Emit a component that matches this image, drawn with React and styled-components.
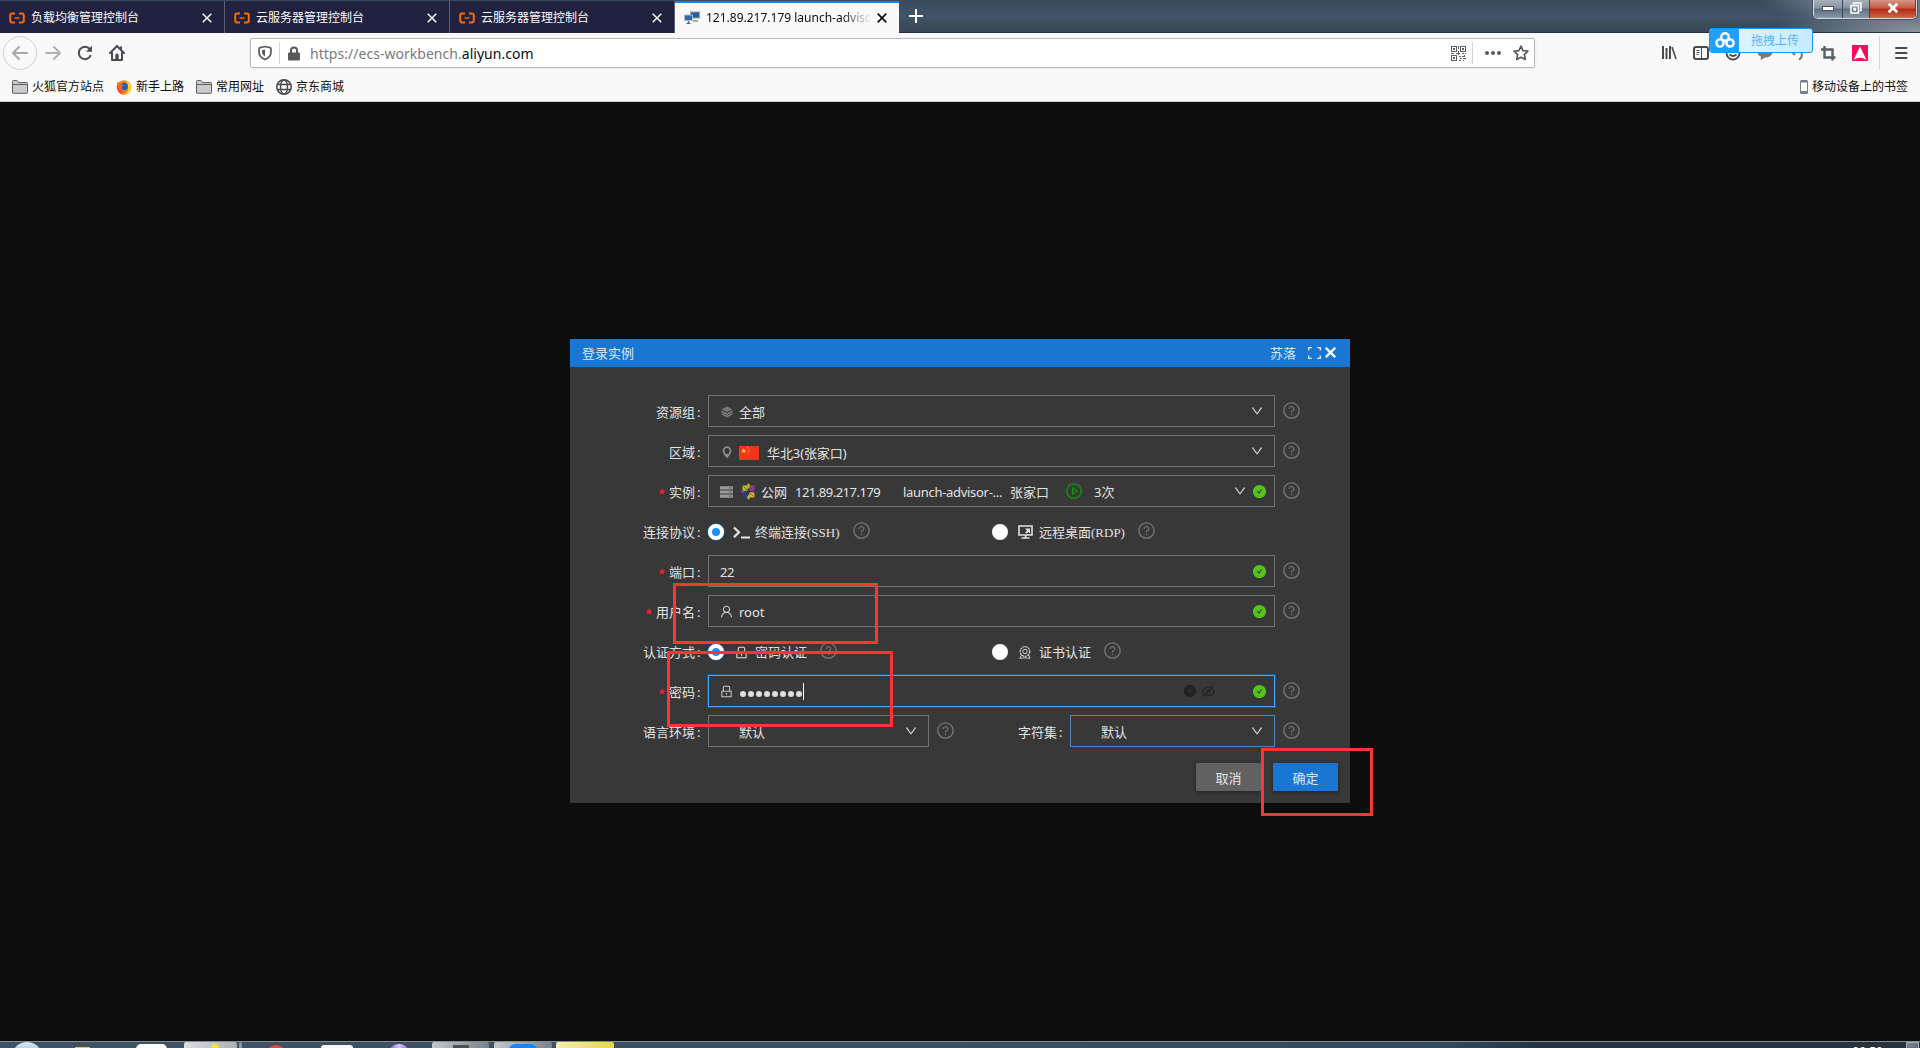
import React from 'react';
import styled, { createGlobalStyle, css } from 'styled-components';
import {
  AiFillCheckCircle,
  AiFillCloseCircle,
  AiOutlineDown,
  AiOutlineEyeInvisible,
  AiOutlineLock,
  AiOutlinePlayCircle,
  AiOutlineQuestionCircle,
  AiOutlineUser
} from 'react-icons/ai';

const GlobalStyle = createGlobalStyle`
  * {
    box-sizing: border-box;
  }

  body {
    margin: 0;
    overflow: hidden;
    background: #0d0d0d;
    font-family: 'Noto Sans', 'Noto Sans CJK SC', sans-serif;
    font-size: 12px;
  }

  svg {
    display: block;
    flex: none;
  }
`;

const Screen = styled.div`
  position: relative;
  display: flex;
  flex-direction: column;
  width: 1920px;
  height: 1048px;
  overflow: hidden;
`;

/* ---------- browser chrome ---------- */

const TabStrip = styled.div`
  display: flex;
  height: 33px;
  padding-top: 1px;
  border-bottom: 1px solid #26323f;
  background:
    radial-gradient(ellipse 150px 34px at 100% 100%, #8b95a0 0%, rgba(139, 149, 160, 0) 100%),
    radial-gradient(ellipse 110px 22px at 1870px 0, #8997a3 0%, rgba(137, 151, 163, 0) 100%),
    linear-gradient(#394a5d 0%, #40546a 55%, #3a4b5a 75%, #38485a 100%);
`;

const Tab = styled.div`
  display: flex;
  align-items: center;
  width: 225px;
  height: 32px;
  padding: 2px 12px 0 9px;
  border-right: 1px solid #5d5f74;
  background: #20223f;
  color: #f9f9fa;

  ${({ $active }) =>
    $active &&
    css`
      width: 224px;
      padding-top: 0;
      border-top: 2px solid #0a84ff;
      border-right: 0;
      background: #f9f9fa;
      color: #0c0c0d;
    `}
`;

const TabTitle = styled.span`
  flex: 1;
  margin: 0 4px 0 6px;
  overflow: hidden;
  line-height: 18px;
  white-space: nowrap;

  ${({ $fade }) =>
    $fade &&
    css`
      margin-right: 6px;
      mask-image: linear-gradient(to right, #000 82%, transparent 100%);
    `}
`;

const NewTab = styled.div`
  padding: 8px 0 0 10px;
`;

const WindowControls = styled.div`
  display: flex;
  width: 104px;
  height: 19px;
  margin: -1px 3px 0 auto;
  border: 1px solid #d5dde4;
  border-top: 0;
  border-radius: 0 0 5px 5px;
  overflow: hidden;
  box-shadow: 0 0 0 1px #46525f;
`;

const WindowButton = styled.div`
  display: flex;
  align-items: center;
  justify-content: center;
  width: ${({ $width }) => $width}px;
  padding-bottom: 2px;
  border-right: 1px solid #3c4856;
  background: ${({ $close }) =>
    $close
      ? 'linear-gradient(#d79588 0%, #c25a45 45%, #ae2a13 50%, #d4674a 100%)'
      : 'linear-gradient(#a7b1bb 0%, #8794a1 45%, #60707f 50%, #8a98a5 100%)'};
`;

const NavBar = styled.div`
  display: flex;
  align-items: center;
  height: 40px;
  padding: 0 12px 0 3px;
  background: #f9f9fa;
`;

const BackButton = styled.div`
  display: flex;
  align-items: center;
  justify-content: center;
  width: 34px;
  height: 34px;
  border: 1px solid #d2d2d4;
  border-radius: 50%;
`;

const NavIcons = styled.div`
  display: flex;
  align-items: center;
  gap: 16px;
  margin-left: 8px;
`;

const UrlBar = styled.div`
  display: flex;
  align-items: center;
  width: 1285px;
  height: 30px;
  margin-left: 125px;
  padding: 0 5px 0 7px;
  border: 1px solid #b9b9bb;
  border-radius: 2px;
  background: #fff;
  box-shadow: 0 1px 4px rgba(0, 0, 0, 0.06);
`;

const Divider = styled.div`
  width: 1px;
  height: ${({ $height = 22 }) => $height}px;
  margin: 0 ${({ $right }) => $right}px 0 ${({ $left }) => $left}px;
  background: #d7d7db;
`;

const UrlText = styled.div`
  flex: 1;
  margin-left: 9px;
  color: #7a7a7c;
  font-size: 14px;
  letter-spacing: 0.03px;

  b {
    color: #0c0c0d;
    font-weight: normal;
  }
`;

const PageActions = styled.div`
  display: flex;
  align-items: center;
  gap: 12px;
`;

const ToolIcons = styled.div`
  display: flex;
  align-items: center;
  gap: 16px;
  margin-left: auto;
`;

const BookmarkBar = styled.div`
  display: flex;
  align-items: center;
  gap: 12px;
  height: 29px;
  padding: 0 12px;
  border-bottom: 1px solid #d0d0d2;
  background: #f9f9fa;
`;

const Bookmark = styled.div`
  display: flex;
  align-items: center;
  gap: 4px;
  line-height: 18px;
  color: #0c0c0d;
  margin-left: ${({ $right }) => ($right ? 'auto' : 0)};
`;

const UploadBadge = styled.div`
  position: absolute;
  top: 28px;
  left: 1709px;
  display: flex;
  width: 104px;
  height: 25px;
  border: 1px solid #1a97fb;
  border-radius: 3px;
  background: linear-gradient(100deg, #e8f7ff, #c5ebff);
  overflow: hidden;
`;

const UploadLogo = styled.div`
  display: flex;
  align-items: center;
  justify-content: center;
  width: 29px;
  padding-bottom: 2px;
  background: #22a0ff;
`;

const UploadText = styled.div`
  flex: 1;
  padding-right: 1px;
  color: #52b5fb;
  line-height: 24px;
  text-align: center;
`;

/* ---------- login dialog ---------- */

const Workspace = styled.main`
  flex: 1;
  padding-top: 237px;
  background: #0d0d0d;
`;

const Dialog = styled.section`
  width: 780px;
  height: 464px;
  margin: 0 auto;
  background: #383838;
  color: #e2e2e2;
  font-size: 13px;
`;

const DialogHeader = styled.header`
  display: flex;
  align-items: center;
  height: 28px;
  padding: 0 14px 0 12px;
  background: #1976d2;
  color: #dbe7f3;
  line-height: 30px;
`;

const DialogUser = styled.span`
  margin: 0 12px 0 auto;
`;

const HeaderIcon = styled.span`
  margin: 0 0 1px ${({ $left = 0 }) => $left}px;
`;

const Form = styled.div`
  display: flex;
  flex-direction: column;
  gap: 8px;
  padding-top: 28px;
`;

const Row = styled.div`
  display: flex;
  align-items: center;
  height: 32px;
`;

const Label = styled.div`
  display: flex;
  align-items: center;
  justify-content: flex-end;
  width: ${({ $width = 138 }) => $width}px;
  padding: 2px 7px 0 0;
  line-height: 20px;

  &::after {
    content: ':';
    width: 4px;
    margin-left: 2px;
  }
`;

const Required = styled.span`
  height: 16px;
  margin-right: 3px;
  color: #f5222d;
  font-family: 'Liberation Mono', monospace;
  font-size: 14px;
  font-weight: bold;
  line-height: 24px;
`;

const Field = styled.div`
  display: flex;
  align-items: center;
  width: ${({ $width = 567 }) => $width}px;
  height: 32px;
  padding: 0 7px 0 11px;
  border: 1px solid ${({ $tone }) => $tone || '#737373'};

  ${({ $focus }) =>
    $focus &&
    css`
      border-color: #40a9ff;
      box-shadow: 0 0 0 1px #23557f;
    `}
`;

const FieldIcon = styled.span`
  display: flex;
  justify-content: center;
  width: ${({ $width = 13 }) => $width}px;
  margin: ${({ $drop = 0 }) => $drop}px ${({ $right = 6 }) => $right}px 0 0;
  color: #c9c9c9;
`;

const Value = styled.span`
  width: ${({ $width }) => ($width ? `${$width}px` : 'auto')};
  padding-top: ${({ $drop = 2 }) => $drop}px;
  margin-left: ${({ $left = 0 }) => $left}px;
  line-height: 20px;
  white-space: nowrap;
  letter-spacing: ${({ $track = 0 }) => $track}px;
`;

const Suffix = styled.span`
  display: flex;
  align-items: center;
  gap: 5px;
  margin-left: auto;
  padding-right: ${({ $select }) => ($select ? 3 : 0)}px;
`;

const Help = styled.span`
  margin: 0 0 ${({ $lift }) => $lift}px ${({ $left }) => $left}px;
  color: #747474;
`;

const Radio = styled.span`
  width: 16px;
  height: 16px;
  border: ${({ $checked }) => ($checked ? '4px' : '8px')} solid #fff;
  border-radius: 50%;
  background: #1890ff;
  box-shadow: ${({ $checked }) => ($checked ? '0 0 0 0.5px #1890ff' : 'none')};
`;

const Option = styled.div`
  display: flex;
  align-items: center;
  width: ${({ $width }) => ($width ? `${$width}px` : 'auto')};
  padding-top: 2px;
`;

const OptionIcon = styled.span`
  display: flex;
  justify-content: center;
  width: 18px;
  margin: 0 5px 0 8px;
`;

const OptionText = styled.span`
  padding-top: 2px;
  font-family: 'Liberation Serif', 'Noto Sans CJK SC', serif;
  line-height: 20px;
`;

const PasswordDots = styled.span`
  display: flex;
  gap: 2px;
  margin: 5px 1px 0 1px;

  i {
    width: 6px;
    height: 6px;
    border-radius: 50%;
    background: #dedede;
  }
`;

const Caret = styled.span`
  width: 1px;
  height: 17px;
  background: #fff;
`;

const PasswordTools = styled.span`
  display: flex;
  align-items: center;
  gap: 4px;
  margin: 0 36px 0 auto;
  color: #222;
`;

const Footer = styled.footer`
  display: flex;
  gap: 12px;
  justify-content: flex-end;
  padding: 16px 12px 0 0;
`;

const Button = styled.button`
  width: 65px;
  height: 28px;
  padding: 1px 0 0;
  border: 0;
  border-radius: 1px;
  background: ${({ $primary }) => ($primary ? '#1976d2' : '#616161')};
  box-shadow: 0 1px 4px rgba(0, 0, 0, 0.4);
  color: #e2e6ea;
  font: inherit;
`;

/* Annotation frames drawn over the page */
const Mark = styled.div`
  position: absolute;
  top: ${({ $y }) => $y}px;
  left: ${({ $x }) => $x}px;
  width: ${({ $w }) => $w}px;
  height: ${({ $h }) => $h}px;
  border: 3px solid #ff3535;
`;

/* ---------- task bar ---------- */

const TaskBar = styled.div`
  display: flex;
  height: 7px;
  border-top: 1px solid #838d95;
  background: linear-gradient(to right, #405163, #3d4e5d 50%, #34495a 75%, #27343f 80%, #27323d);
  overflow: hidden;
`;

const TaskItem = styled.div`
  display: flex;
  justify-content: center;
  width: ${({ $width }) => $width}px;
  height: 20px;
  margin-left: ${({ $left }) => $left}px;
  border-radius: 2px;
  background: ${({ $fill }) => $fill || 'transparent'};
`;

const TaskGlyph = styled.div`
  width: ${({ $width }) => $width}px;
  height: 24px;
  margin-top: ${({ $top }) => $top}px;
  margin-left: ${({ $left = 0 }) => $left}px;
  border-radius: ${({ $radius = 0 }) => $radius};
  background: ${({ $fill }) => $fill};
`;

const Clock = styled.div`
  margin: 3px 23px 0 auto;
  color: #fff;
  line-height: 14px;
`;

const ShowDesktop = styled.div`
  width: 13px;
  height: 20px;
  margin-right: 1px;
  border: 1px solid #a3abb2;
  background: linear-gradient(135deg, #7f8890, #4a535c);
`;

/* ---------- icons ---------- */

const AliIcon = () => (
  <svg width="16" height="12" viewBox="0 0 16 12" fill="none" stroke="#ff6a00" strokeWidth="2">
    <path d="M6 1.5H3.2Q1.2 1.5 1.2 3.5v5q0 2 2 2H6M10 1.5h2.8q2 0 2 2v5q0 2-2 2H10" />
    <path d="M5.5 6h5" strokeWidth="1.4" />
  </svg>
);

const ComputersIcon = () => (
  <svg width="16" height="14" viewBox="0 0 16 14">
    <rect x="6.5" y="1" width="9" height="6" fill="#245f9b" stroke="#8fa4b5" />
    <path d="M9 10h5" stroke="#8a9299" strokeWidth="1.5" />
    <rect x=".5" y="4" width="8" height="5.5" fill="#2c6bad" stroke="#b0bdc7" />
    <path d="M4.5 10v2M2.5 12.3h4" stroke="#5c666e" strokeWidth="1.3" />
  </svg>
);

const Cross = ({ size = 10, width = 1.5, color = 'currentColor' }) => (
  <svg width={size} height={size} viewBox="0 0 10 10" stroke={color} strokeWidth={width}>
    <path d="M.7.7l8.6 8.6M9.3.7L.7 9.3" />
  </svg>
);

const Arrow = ({ flip }) => (
  <svg width="16" height="14" viewBox="0 0 16 14" fill="none" stroke={flip ? '#b1b1b3' : '#a9a9ab'} strokeWidth="2" strokeLinecap="round" strokeLinejoin="round">
    <path d={flip ? 'M1 7h14M9 1l6 6-6 6' : 'M15 7H1M7 1L1 7l6 6'} />
  </svg>
);

const ReloadIcon = () => (
  <svg width="16" height="16" viewBox="0 0 16 16" fill="none" stroke="#4a4a4f" strokeWidth="2">
    <path d="M13.8 10.2A6.2 6.2 0 1 1 12.8 4L14 5.5" />
    <path d="M15 .8v6H9z" fill="#4a4a4f" stroke="none" />
  </svg>
);

const HomeIcon = () => (
  <svg width="16" height="16" viewBox="0 0 16 16" fill="none" stroke="#4a4a4f" strokeWidth="2" strokeLinejoin="round">
    <path d="M1 8l7-7 7 7" strokeLinecap="round" />
    <path d="M3 7v8h10V7M12 1.5v3" />
    <path d="M8 8.5a1.7 1.7 0 0 1 1.7 1.7V15H6.3v-4.8A1.7 1.7 0 0 1 8 8.5z" fill="#4a4a4f" stroke="none" />
  </svg>
);

const ShieldIcon = () => (
  <svg width="14" height="16" viewBox="0 0 14 16" fill="none" stroke="#5a5a5e" strokeWidth="1.7">
    <path d="M7 1.5L2 2.6Q1 2.8 1 4v3q0 5 6 7.5 6-2.5 6-7.500V4q0-1.200-1-1.400z" strokeLinejoin="round" />
    <path d="M7 4.500v7q-3-1.700-3-5V5.200z" fill="#5a5a5e" stroke="none" />
  </svg>
);

const PadlockIcon = () => (
  <svg width="14" height="15" viewBox="0 0 14 15">
    <path d="M4 7V4.500a3 3 0 0 1 6 0V7" fill="none" stroke="#58585b" strokeWidth="2" />
    <rect x="1" y="6.500" width="12" height="8" rx="1.200" fill="#58585b" />
  </svg>
);

const QrIcon = () => (
  <svg width="15" height="15" viewBox="0 0 15 15" fill="none" stroke="#5d5d60" shapeRendering="crispEdges">
    <path d="M.5.5h5v5h-5zM9.500.5h5v5h-5zM.5 9.500h5v5h-5z" />
    <path d="M2 3h2M11 3h2M2 12h2" strokeWidth="2" />
    <path d="M7.500 0v3M7.500 5v4M0 7.500h3M5 7.500h4M11 7.500h2M14 7.500h1M8 10.500h2M11 10.500h2M9 12.500h2M12 12.500h3M8 14.500h2M11.500 14.500h1M13.500 9v2" />
  </svg>
);

const DotsIcon = () => (
  <svg width="16" height="4" viewBox="0 0 16 4" fill="#5a5a5e">
    <circle cx="2" cy="2" r="2" />
    <circle cx="8" cy="2" r="2" />
    <circle cx="14" cy="2" r="2" />
  </svg>
);

const StarIcon = () => (
  <svg width="16" height="16" viewBox="0 0 16 16" fill="none" stroke="#5a5a5e" strokeWidth="1.700" strokeLinejoin="round">
    <path d="M8 1.200l2.100 4.400 4.800.6-3.500 3.400.9 4.900L8 12.200l-4.300 2.300.9-4.900L1.100 6.200l4.800-.6z" />
  </svg>
);

const LibraryIcon = () => (
  <svg width="16" height="16" viewBox="0 0 16 16" stroke="#4a4a4f" strokeWidth="2">
    <path d="M2 1v13M5.500 3v11M9 1v13" />
    <path d="M11 2l4 12" strokeWidth="1.600" />
  </svg>
);

const SidebarIcon = () => (
  <svg width="16" height="14" viewBox="0 0 16 14" fill="none" stroke="#4a4a4f">
    <rect x="1" y="1" width="14" height="12" rx="2" strokeWidth="2" />
    <path d="M8.500 1v12M3.500 4.500h3M3.500 6.500h3M3.500 8.500h2" />
  </svg>
);

const FaceIcon = () => (
  <svg width="16" height="16" viewBox="0 0 16 16" fill="none" stroke="#4a4a4f" strokeWidth="1.800">
    <circle cx="8" cy="8" r="6.500" />
    <path d="M4.500 9.500q3.500 3 7 0" />
  </svg>
);

const ChatIcon = () => (
  <svg width="16" height="16" viewBox="0 0 16 16" fill="#737b83">
    <path d="M8 1c4.500 0 7.500 2.500 7.500 6S12 12.500 8 12.500L3.500 15l.5-3.500C1.500 10.500.5 9 .5 7 .5 3.500 3.500 1 8 1z" />
  </svg>
);

const UndoIcon = () => (
  <svg width="16" height="16" viewBox="0 0 16 16" fill="none" stroke="#737b83" strokeWidth="2">
    <path d="M2 6h7c5 0 5 6.500 1 8.500M6 2L2 6l4 4" />
  </svg>
);

const CropIcon = () => (
  <svg width="15" height="15" viewBox="0 0 15 15" fill="none" stroke="#56606b" strokeWidth="2.400">
    <path d="M3.500 0v11.500H14.500M0 3.500h11.500V14.500" />
  </svg>
);

const PinkIcon = () => (
  <svg width="16" height="16" viewBox="0 0 16 16">
    <path d="M0 0h16v16H0z" fill="#ff0a5b" />
    <path d="M8 1.500L14.500 15Q8 10.500 1.500 15z" fill="#fff" />
  </svg>
);

const MenuIcon = () => (
  <svg width="14" height="12" viewBox="0 0 14 12" stroke="#4a4a4f" strokeWidth="2" strokeLinecap="round">
    <path d="M2 1h10.500M2 6h10.500M2 11h10.500" />
  </svg>
);

const FolderIcon = () => (
  <svg width="16" height="14" viewBox="0 0 16 14" fill="#cbcacf" stroke="#5c5c61">
    <path d="M.5 13V1.500q0-1 1-1H5l1.500 2h8q1 0 1 1V12.500q0 .8-.8.8H1.300q-.8 0-.8-.8z" />
    <path d="M1 4.500h14" />
  </svg>
);

const FirefoxIcon = () => (
  <svg width="16" height="16" viewBox="0 0 16 16">
    <circle cx="8" cy="8.500" r="7.300" fill="#ff8a16" />
    <path d="M10 1q5.500 3 5 8.500Q14 15 8.500 15.800q5-4 3.500-9z" fill="#ffd42e" />
    <path d="M1.500 3L1 9q1 5.500 6.500 6.500-5-5-2.500-9z" fill="#ff3a57" />
    <circle cx="8" cy="7.500" r="4" fill="#2166c2" />
    <path d="M2 3.500q4 0 5 3Q4.500 8 6 10.200q2 1.800 5 .3-2.500 3.800-6.500 1.500Q1 9 2 3.500z" fill="#ff6a1d" />
  </svg>
);

const GlobeIcon = () => (
  <svg width="16" height="16" viewBox="0 0 16 16" fill="none" stroke="#4a4a4f" strokeWidth="1.400">
    <circle cx="8" cy="8" r="7.200" strokeWidth="1.600" />
    <ellipse cx="8" cy="8" rx="3.500" ry="7" />
    <path d="M1.500 5.500h13M1.500 10.500h13" />
  </svg>
);

const PhoneIcon = () => (
  <svg width="8" height="14" viewBox="0 0 8 14">
    <rect width="8" height="14" rx="1.500" fill="#737f8b" />
    <path d="M1 2.500h6v8.500H1z" fill="#fff" />
  </svg>
);

const CloudLogo = () => (
  <svg width="20" height="16" viewBox="0 0 20 16" fill="none" stroke="#fff" strokeWidth="2.400">
    <circle cx="10" cy="5" r="3.700" />
    <circle cx="5" cy="11" r="3.600" />
    <circle cx="15" cy="11" r="3.600" />
  </svg>
);

const LayersIcon = () => (
  <svg width="12" height="12" viewBox="0 0 12 12" fill="#777">
    <path d="M6 .5l5.500 2.700L6 6 .5 3.200z" />
    <path d="M.5 4.200L6 7l5.500-2.800v4.300L6 11.500.5 8.500z" />
    <path d="M.5 6.500L6 9.300l5.500-2.800" fill="none" stroke="#4a4a4a" strokeWidth=".6" />
  </svg>
);

const PinIcon = () => (
  <svg width="10" height="12" viewBox="0 0 10 12">
    <path d="M5 1.200a3.600 3.600 0 0 1 3.600 3.600C8.600 7 6.500 8.800 5 11 3.500 8.800 1.400 7 1.400 4.800A3.600 3.600 0 0 1 5 1.200z" fill="none" stroke="#8f8f8f" strokeWidth="1.700" />
    <path d="M3 8h4l-2 3.500z" fill="#8f8f8f" />
  </svg>
);

const FlagIcon = () => (
  <svg width="20" height="14" viewBox="0 0 20 14">
    <rect width="20" height="14" rx="1" fill="#f5341c" />
    <path d="M4.700 2l.7 1.900h2L5.800 5.100l.6 2-1.700-1.200L3 7.100l.6-2L2 3.900h2z" fill="#ffd93b" />
    <path d="M8 1.500h1M9.300 3.200h1M9.300 5.500h1M8 7.800h1" stroke="#ffb52e" />
  </svg>
);

const ServerIcon = () => (
  <svg width="13" height="12" viewBox="0 0 13 12" fill="#9a9a9a">
    <path d="M0 .3h13v3.200H0zM0 4.400h13v3.200H0zM0 8.500h13v3.200H0z" />
    <path d="M9 1.900h3M9 6h3M9 10.100h3" stroke="#555" strokeWidth=".7" />
  </svg>
);

const CentosIcon = () => (
  <svg width="17" height="17" viewBox="0 0 17 17">
    <path d="M2.500 2.500h5.300v5.300H2.500z" fill="#9ccd2a" />
    <path d="M9.200 2.500h5.300v5.300H9.200z" fill="#a03a86" />
    <path d="M2.500 9.200h5.300v5.300H2.500z" fill="#30358f" />
    <path d="M9.200 9.200h5.300v5.300H9.200z" fill="#efa724" />
    <path d="M8.500 0l1.500 2.500-1.500 3L7 2.500z" fill="#efa724" />
    <path d="M17 8.500L14.500 10l-3-1.500 3-1.500z" fill="#30358f" />
    <path d="M8.500 17L7 14.500l1.500-3 1.500 3z" fill="#9ccd2a" />
    <path d="M0 8.500L2.500 7l3 1.500-3 1.500z" fill="#a03a86" />
    <path d="M3.500 3.500l10 10M13.500 3.500l-10 10" stroke="#383838" strokeWidth=".6" />
  </svg>
);

const PromptIcon = () => (
  <svg width="17" height="13" viewBox="0 0 17 13" fill="none" stroke="#e6e6e6" strokeWidth="2.200">
    <path d="M1 1.500l5 4.800-5 4.800M8 11.500h9" />
  </svg>
);

const RemoteIcon = () => (
  <svg width="15" height="14" viewBox="0 0 15 14" fill="none" stroke="#e2e2e2" strokeWidth="1.600">
    <path d="M1 1h13v9H1zM7.500 10v3M3.500 13h8" />
    <path d="M7 3.500h5v5L10.300 7 8.500 8.700 7.200 7.400 9 5.500z" fill="#e2e2e2" stroke="none" />
  </svg>
);

const CertIcon = () => (
  <svg width="12" height="13" viewBox="0 0 12 13" fill="none" stroke="#cfcfcf">
    <circle cx="6" cy="5.500" r="4.800" strokeDasharray="2.200 .6" strokeWidth="1.200" />
    <circle cx="6" cy="5.500" r="2.200" />
    <path d="M2.500 9L.8 12.200h3M9.500 9l1.700 3.200h-3M4 11.800h4" />
  </svg>
);

const ExpandIcon = () => (
  <svg width="13" height="12" viewBox="0 0 13 12" fill="none" stroke="#e8f1fa" strokeWidth="1.300">
    <path d="M.7 3.500V.7h3M9.300.7h3v2.800M12.300 8.500v2.800h-3M3.700 11.300h-3V8.500" />
  </svg>
);

/* ---------- parts ---------- */

const HelpIcon = ({ left = 7, lift = 1 }) => (
  <Help $left={left} $lift={lift}>
    <AiOutlineQuestionCircle size={19} />
  </Help>
);

const Chevron = () => <AiOutlineDown size={14} color="#dcdcdc" />;
const Valid = () => <AiFillCheckCircle size={15} color="#52c41a" />;

const FormLabel = ({ required, width, children }) => (
  <Label $width={width}>
    {required && <Required>*</Required>}
    {children}
  </Label>
);

const tabs = ['负载均衡管理控制台', '云服务器管理控制台', '云服务器管理控制台'];

const marks = [
  { x: 673, y: 583, w: 205, h: 61 },
  { x: 667, y: 651, w: 226, h: 76 },
  { x: 1261, y: 748, w: 112, h: 68 }
];

const Browser = () => (
  <>
    <TabStrip>
      {tabs.map((title, index) => (
        <Tab key={index}>
          <AliIcon />
          <TabTitle>{title}</TabTitle>
          <Cross />
        </Tab>
      ))}
      <Tab $active>
        <ComputersIcon />
        <TabTitle $fade>121.89.217.179 launch-advisor</TabTitle>
        <Cross width={1.7} />
      </Tab>
      <NewTab>
        <svg width="14" height="14" viewBox="0 0 14 14" stroke="#fff" strokeWidth="2">
          <path d="M7 0v14M0 7h14" />
        </svg>
      </NewTab>
      <WindowControls>
        <WindowButton $width={29}>
          <svg width="12" height="5" viewBox="0 0 12 5">
            <rect x=".5" y=".5" width="11" height="4" fill="#fff" stroke="#4b5562" />
          </svg>
        </WindowButton>
        <WindowButton $width={27}>
          <svg width="12" height="12" viewBox="0 0 12 12" fill="none" stroke="#fff" strokeWidth="1.5">
            <path d="M3.500 2.500V1H11v7.500H9.500" />
            <path d="M1 3.500h7.500V11H1zM4 6.500h1.500V8H4z" />
          </svg>
        </WindowButton>
        <WindowButton $width={46} $close>
          <Cross size={10} width={2.8} color="#fff" />
        </WindowButton>
      </WindowControls>
    </TabStrip>

    <NavBar>
      <BackButton>
        <Arrow />
      </BackButton>
      <NavIcons>
        <Arrow flip />
        <ReloadIcon />
        <HomeIcon />
      </NavIcons>
      <UrlBar>
        <ShieldIcon />
        <Divider $left={7} $right={7} />
        <PadlockIcon />
        <UrlText>
          https://ecs-workbench.<b>aliyun.com</b>
        </UrlText>
        <QrIcon />
        <Divider $left={6} $right={12} />
        <PageActions>
          <DotsIcon />
          <StarIcon />
        </PageActions>
      </UrlBar>
      <ToolIcons>
        <LibraryIcon />
        <SidebarIcon />
        <FaceIcon />
        <ChatIcon />
        <UndoIcon />
        <CropIcon />
        <PinkIcon />
      </ToolIcons>
      <Divider $left={11} $right={14} $height={34} />
      <MenuIcon />
    </NavBar>

    <BookmarkBar>
      <Bookmark>
        <FolderIcon />
        火狐官方站点
      </Bookmark>
      <Bookmark>
        <FirefoxIcon />
        新手上路
      </Bookmark>
      <Bookmark>
        <FolderIcon />
        常用网址
      </Bookmark>
      <Bookmark>
        <GlobeIcon />
        京东商城
      </Bookmark>
      <Bookmark $right>
        <PhoneIcon />
        移动设备上的书签
      </Bookmark>
    </BookmarkBar>

    <UploadBadge>
      <UploadLogo>
        <CloudLogo />
      </UploadLogo>
      <UploadText>拖拽上传</UploadText>
    </UploadBadge>
  </>
);

const LoginDialog = () => (
  <Dialog>
    <DialogHeader>
      登录实例
      <DialogUser>苏落</DialogUser>
      <HeaderIcon>
        <ExpandIcon />
      </HeaderIcon>
      <HeaderIcon $left={4}>
        <Cross size={11} width={2.2} color="#f0f6fc" />
      </HeaderIcon>
    </DialogHeader>

    <Form>
      <Row>
        <FormLabel>资源组</FormLabel>
        <Field>
          <FieldIcon $drop={2}>
            <LayersIcon />
          </FieldIcon>
          <Value>全部</Value>
          <Suffix $select>
            <Chevron />
          </Suffix>
        </Field>
        <HelpIcon />
      </Row>

      <Row>
        <FormLabel>区域</FormLabel>
        <Field>
          <FieldIcon $drop={2}>
            <PinIcon />
          </FieldIcon>
          <FieldIcon $width={20} $drop={4} $right={8}>
            <FlagIcon />
          </FieldIcon>
          <Value $drop={4} $track={-0.1}>
            华北3(张家口)
          </Value>
          <Suffix $select>
            <Chevron />
          </Suffix>
        </Field>
        <HelpIcon />
      </Row>

      <Row>
        <FormLabel required>实例</FormLabel>
        <Field>
          <FieldIcon $drop={2} $right={7}>
            <ServerIcon />
          </FieldIcon>
          <CentosIcon />
          <Value $left={4} $width={34}>
            公网
          </Value>
          <Value $width={108} $track={-0.5}>
            121.89.217.179
          </Value>
          <Value $width={107} $track={-0.3}>
            launch-advisor-...
          </Value>
          <Value $width={55}>张家口</Value>
          <AiOutlinePlayCircle size={18} color="#0d9a0d" />
          <Value $left={11}>3次</Value>
          <Suffix>
            <Chevron />
            <Valid />
          </Suffix>
        </Field>
        <HelpIcon />
      </Row>

      <Row>
        <FormLabel>连接协议</FormLabel>
        <Option $width={284}>
          <Radio $checked />
          <OptionIcon>
            <PromptIcon />
          </OptionIcon>
          <OptionText>终端连接(SSH)</OptionText>
          <HelpIcon left={12} lift={3} />
        </Option>
        <Option>
          <Radio />
          <OptionIcon>
            <RemoteIcon />
          </OptionIcon>
          <OptionText>远程桌面(RDP)</OptionText>
          <HelpIcon left={12} lift={3} />
        </Option>
      </Row>

      <Row>
        <FormLabel required>端口</FormLabel>
        <Field>
          <Value $track={-0.4}>22</Value>
          <Suffix>
            <Valid />
          </Suffix>
        </Field>
        <HelpIcon />
      </Row>

      <Row>
        <FormLabel required>用户名</FormLabel>
        <Field>
          <FieldIcon>
            <AiOutlineUser size={15} />
          </FieldIcon>
          <Value>root</Value>
          <Suffix>
            <Valid />
          </Suffix>
        </Field>
        <HelpIcon />
      </Row>

      <Row>
        <FormLabel>认证方式</FormLabel>
        <Option $width={284}>
          <Radio $checked />
          <OptionIcon>
            <AiOutlineLock size={15} />
          </OptionIcon>
          <OptionText>密码认证</OptionText>
          <HelpIcon left={12} lift={3} />
        </Option>
        <Option>
          <Radio />
          <OptionIcon>
            <CertIcon />
          </OptionIcon>
          <OptionText>证书认证</OptionText>
          <HelpIcon left={12} lift={3} />
        </Option>
      </Row>

      <Row>
        <FormLabel required>密码</FormLabel>
        <Field $focus>
          <FieldIcon>
            <AiOutlineLock size={15} />
          </FieldIcon>
          <PasswordDots>
            {Array.from({ length: 8 }, (_, i) => (
              <i key={i} />
            ))}
          </PasswordDots>
          <Caret />
          <PasswordTools>
            <AiFillCloseCircle size={14} />
            <AiOutlineEyeInvisible size={15} />
          </PasswordTools>
          <Valid />
        </Field>
        <HelpIcon />
      </Row>

      <Row>
        <FormLabel>语言环境</FormLabel>
        <Field $width={221}>
          <Value $left={19}>默认</Value>
          <Suffix $select>
            <Chevron />
          </Suffix>
        </Field>
        <HelpIcon />
        <FormLabel width={115}>字符集</FormLabel>
        <Field $width={205} $tone="#4a87bd">
          <Value $left={19}>默认</Value>
          <Suffix $select>
            <Chevron />
          </Suffix>
        </Field>
        <HelpIcon />
      </Row>
    </Form>

    <Footer>
      <Button>取消</Button>
      <Button $primary>确定</Button>
    </Footer>
  </Dialog>
);

const steel = 'linear-gradient(100deg, #c3c8cc, #747e87)';

const Tasks = () => (
  <TaskBar>
    <TaskGlyph $left={13} $width={28} $top={0} $radius="50%" $fill="linear-gradient(#dce8ef, #7e9db4)" />
    <TaskGlyph $left={34} $width={15} $top={5} $fill="#d8c27d" />
    <TaskGlyph $left={46} $width={31} $top={2} $radius="5px" $fill="#fff" />
    <TaskItem $left={17} $width={53} $fill="linear-gradient(100deg, #dcdfe2, #a8adb3)">
      <TaskGlyph $width={8} $top={2} $left={8} $radius="4px" $fill="#f5e62c" />
    </TaskItem>
    <TaskItem $left={2} $width={3} $fill="#8b949c" />
    <TaskGlyph $left={24} $width={20} $top={3} $radius="10px" $fill="#db4b3f" />
    <TaskGlyph $left={35} $width={32} $top={3} $radius="3px" $fill="#f7f7fa" />
    <TaskGlyph $left={35} $width={22} $top={2} $radius="11px" $fill="linear-gradient(to right, #7152d4, #d9c9ff, #7152d4)" />
    <TaskItem $left={22} $width={57} $fill={steel}>
      <TaskGlyph $width={16} $top={3} $fill="#4d4d4d" />
    </TaskItem>
    <TaskItem $left={5} $width={58} $fill={steel}>
      <TaskGlyph $width={30} $top={2} $radius="8px" $fill="#1686ff" />
    </TaskItem>
    <TaskItem $left={4} $width={58} $fill="linear-gradient(100deg, #f4efb4, #e3d63c)" />
    <Clock>00:50</Clock>
    <ShowDesktop />
  </TaskBar>
);

const App = () => (
  <Screen>
    <GlobalStyle />
    <Browser />
    <Workspace>
      <LoginDialog />
    </Workspace>
    <Tasks />
    {marks.map(({ x, y, w, h }) => (
      <Mark key={y} $x={x} $y={y} $w={w} $h={h} />
    ))}
  </Screen>
);

export default App;
